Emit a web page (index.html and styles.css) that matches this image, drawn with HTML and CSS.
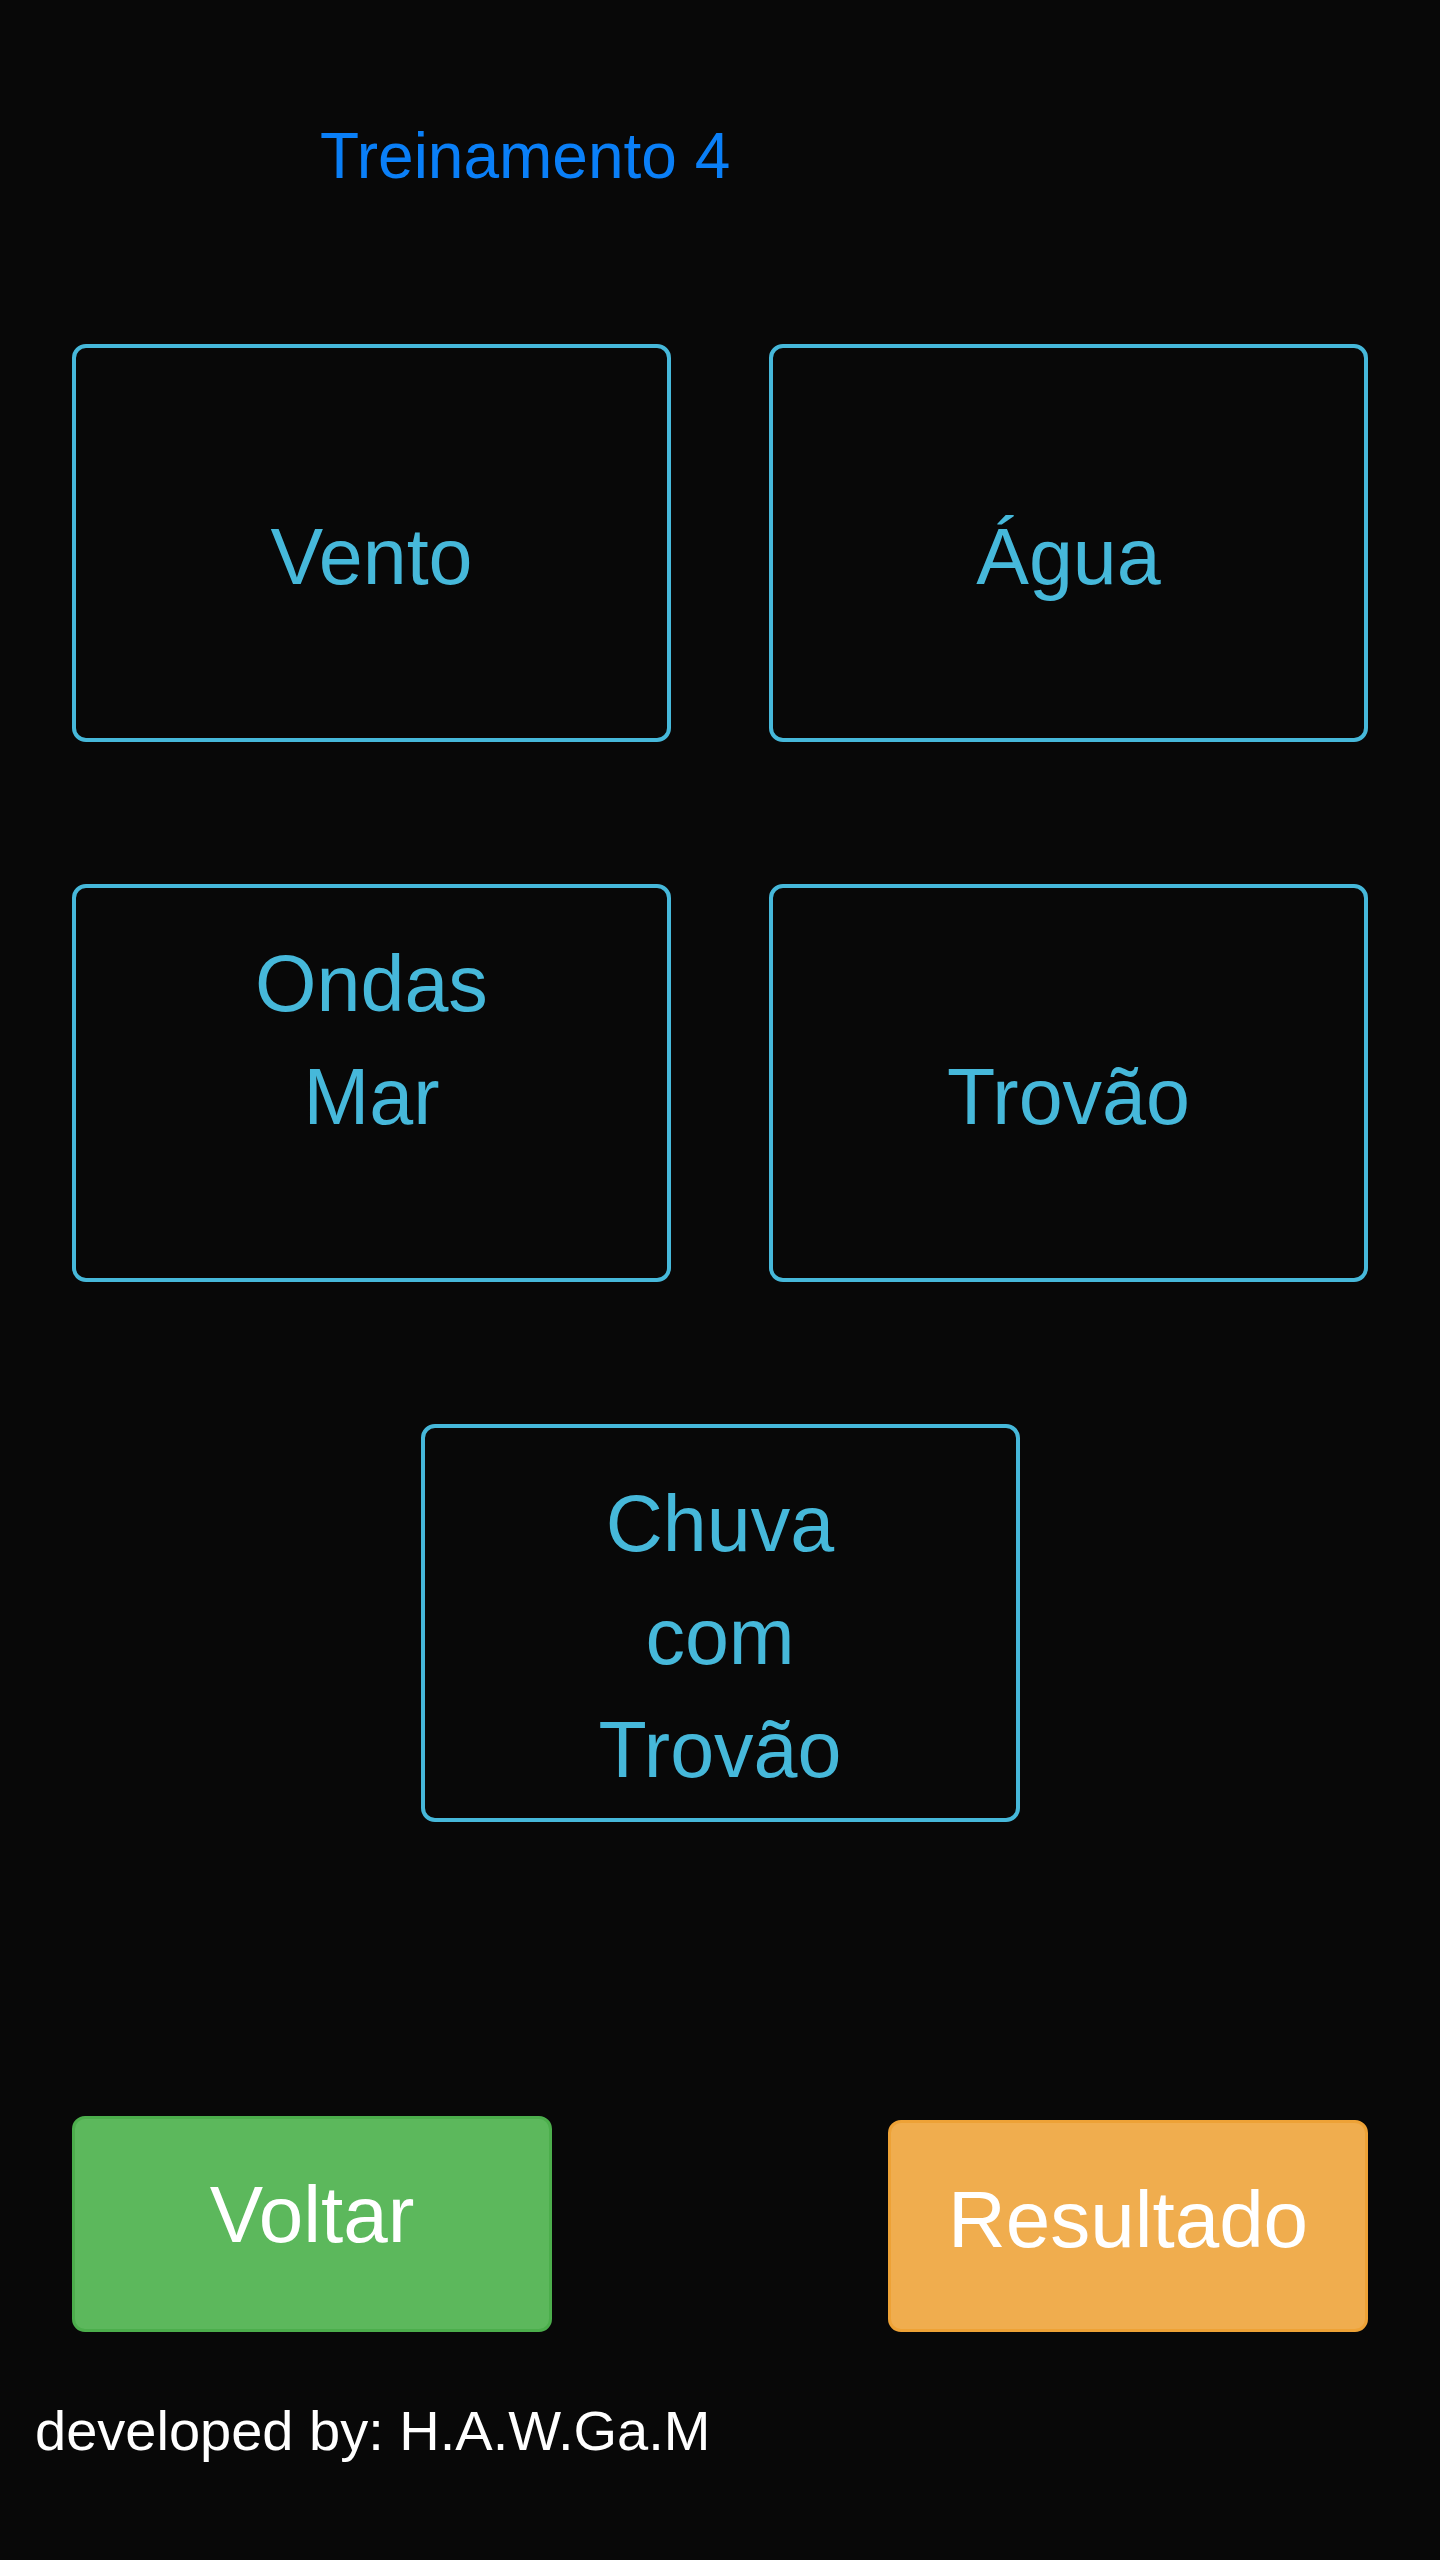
FILE: index.html
```html
<!DOCTYPE html>
<html lang="pt">
<head>
<meta charset="utf-8">
<title>Treinamento 4</title>
<link rel="stylesheet" href="styles.css">
</head>
<body>
<div class="page">
  <h1 class="title">Treinamento 4</h1>
  <div class="grid">
    <div class="box single">Vento</div>
    <div class="box single">Água</div>
    <div class="box">Ondas<br>Mar</div>
    <div class="box single">Trovão</div>
    <div class="box wide">Chuva<br>com<br>Trovão</div>
  </div>
  <div class="actions">
    <button class="btn btn-back">Voltar</button>
    <button class="btn btn-result">Resultado</button>
  </div>
  <footer class="footer">developed by: H.A.W.Ga.M</footer>
</div>
</body>
</html>
```

FILE: styles.css
```css
html, body {
  margin: 0;
  padding: 0;
  background: #080808;
}
body {
  font-family: "Liberation Sans", Arial, sans-serif;
  min-height: 2560px;
}
.page {
  width: 1440px;
  display: flex;
  flex-direction: column;
}
.title {
  margin: 110px 0 0;
  padding-left: 320px;
  font-size: 64px;
  font-weight: normal;
  line-height: 92px;
  color: #0a7ff7;
}
.grid {
  margin-top: 142px;
  padding: 0 72px;
  display: grid;
  grid-template-columns: 599px 599px;
  column-gap: 98px;
  row-gap: 142px;
}
.box {
  box-sizing: border-box;
  height: 398px;
  border: 4px solid #46b8da;
  border-radius: 14px;
  padding-top: 39px;
  color: #46b8da;
  font-size: 79px;
  line-height: 113px;
  text-align: center;
}
.box.single {
  padding-top: 152px;
}
.box.wide {
  grid-column: 1 / span 2;
  justify-self: center;
  width: 599px;
}
.actions {
  margin-top: 294px;
  padding: 0 72px;
  display: flex;
  justify-content: space-between;
  align-items: flex-end;
}
.btn {
  box-sizing: border-box;
  width: 480px;
  margin: 0;
  border-width: 3px;
  border-style: solid;
  border-radius: 13px;
  color: #ffffff;
  font-family: "Liberation Sans", Arial, sans-serif;
  font-size: 80px;
  line-height: 114px;
  text-align: center;
  display: flex;
  justify-content: center;
  align-items: flex-start;
}
.btn-back {
  height: 216px;
  padding: 39px 0 0;
  background: #5cb85c;
  border-color: #4cae4c;
}
.btn-result {
  height: 212px;
  padding: 40px 0 0;
  background: #f0ad4e;
  border-color: #eea236;
}
.footer {
  margin-top: 59px;
  padding-left: 35px;
  color: #ffffff;
  font-size: 56px;
  line-height: 80px;
}
```
